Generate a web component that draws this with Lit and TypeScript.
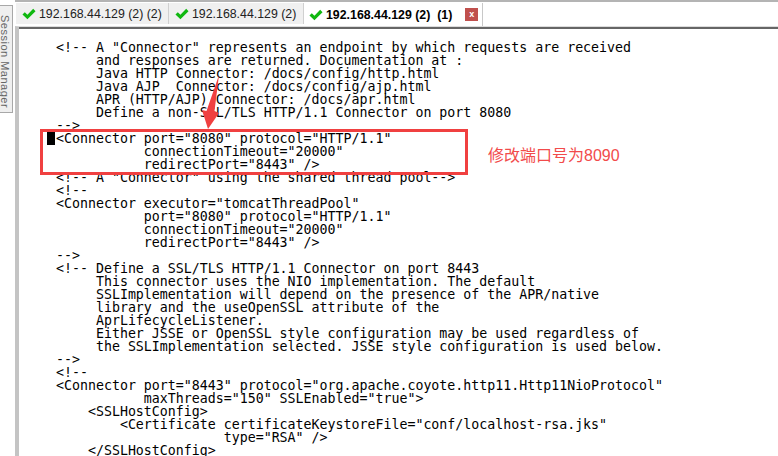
import { LitElement, html, css } from "lit";
import { customElement } from "lit/decorators.js";

const CODE = `<!-- A "Connector" represents an endpoint by which requests are received
     and responses are returned. Documentation at :
     Java HTTP Connector: /docs/config/http.html
     Java AJP  Connector: /docs/config/ajp.html
     APR (HTTP/AJP) Connector: /docs/apr.html
     Define a non-SSL/TLS HTTP/1.1 Connector on port 8080
-->
<Connector port="8080" protocol="HTTP/1.1"
           connectionTimeout="20000"
           redirectPort="8443" />
<!-- A "Connector" using the shared thread pool-->
<!--
<Connector executor="tomcatThreadPool"
           port="8080" protocol="HTTP/1.1"
           connectionTimeout="20000"
           redirectPort="8443" />
-->
<!-- Define a SSL/TLS HTTP/1.1 Connector on port 8443
     This connector uses the NIO implementation. The default
     SSLImplementation will depend on the presence of the APR/native
     library and the useOpenSSL attribute of the
     AprLifecycleListener.
     Either JSSE or OpenSSL style configuration may be used regardless of
     the SSLImplementation selected. JSSE style configuration is used below.
-->
<!--
<Connector port="8443" protocol="org.apache.coyote.http11.Http11NioProtocol"
           maxThreads="150" SSLEnabled="true">
    <SSLHostConfig>
        <Certificate certificateKeystoreFile="conf/localhost-rsa.jks"
                     type="RSA" />
    </SSLHostConfig>`;

const check = html`<svg class="check" viewBox="0 0 15 12" width="14" height="12"><path d="M0.5 6.5 L3 4 L5.8 6.8 L12 0.5 L14.5 3 L5.8 11.5 Z" fill="#10b810"/></svg>`;

@customElement("app-root")
export class AppRoot extends LitElement {
  static styles = css`
    :host { display: block; width: 778px; height: 456px; overflow: hidden; position: relative; background: #fff; font-family: "Liberation Sans", Arial, sans-serif; }
    .top { height: 3px; display: flex; }
    .top .a { width: 15px; background: #fff; }
    .top .b { flex: 1; background: #b4b4b4; height: 2px; }
    .main { display: flex; height: 453px; }
    .side { width: 15px; flex: none; background: #fff; padding-top: 2px; box-sizing: border-box; }
    .stab { width: 13px; height: 108px; background: #efefef; border: 1px solid #a8a8a8; border-left: none; box-sizing: border-box; overflow: hidden; display: flex; justify-content: center; }
    .stab span { writing-mode: vertical-rl; font-size: 11px; color: #666; white-space: nowrap; line-height: 11px; padding-top: 9px; letter-spacing: 0.5px; margin-left: -3px; }
    .content { flex: 1; display: flex; flex-direction: column; min-width: 0; }
    .tabs { height: 23px; display: flex; background: #fff; padding-left: 1px; box-sizing: border-box; flex: none; }
    .tab { height: 21px; display: flex; align-items: center; background: #f0f0f0; border-right: 1px solid #d0d0d0; box-sizing: border-box; font-size: 12.35px; color: #222; white-space: nowrap; padding-left: 6px; }
    .tab .check { margin-right: 3px; flex: none; }
    .tab.t1 { width: 153px; }
    .tab.t2 { width: 135px; }
    .tab.active { width: 179px; height: 23px; background: #fff; font-weight: 700; color: #000; border-right: 1px solid #c8c8c8; padding-left: 5px; }
    .close { width: 13px; height: 13px; background: #c0504d; color: #fff; font-size: 9px; font-weight: 700; display: flex; align-items: center; justify-content: center; margin-left: 13px; line-height: 1; }
    .editor { flex: 1; border-top: 1px solid #dcdcdc; border-left: 4px solid #c4c4c4; position: relative; box-sizing: border-box; overflow: hidden; }
    .editor::before { content: ""; position: absolute; left: 0; right: 0; top: 0; height: 2px; background: #666; }
    pre { margin: 0; padding: 14px 0 0 37px; font-family: "DejaVu Sans Mono", monospace; font-size: 13.28px; line-height: 13px; color: #000; }
    .caret { position: absolute; left: 28px; top: 105px; width: 8px; height: 13px; background: #000; }
    .box { position: absolute; left: 21px; top: 102px; width: 428px; height: 46px; border: 3px solid #f04040; box-sizing: border-box; }
    .note { position: absolute; left: 469px; top: 119px; color: #f24b4b; font-size: 16px; font-family: "Liberation Sans", "Noto Sans CJK SC", sans-serif; line-height: 20px; white-space: nowrap; }
    .arrow { position: absolute; left: 0; top: 0; }
  `;

  render() {
    return html`
      <div class="top"><div class="a"></div><div class="b"></div></div>
      <div class="main">
        <div class="side"><div class="stab"><span>Session Manager</span></div></div>
        <div class="content">
          <div class="tabs">
            <div class="tab t1">${check}192.168.44.129 (2) (2)</div>
            <div class="tab t2">${check}192.168.44.129 (2)</div>
            <div class="tab active">${check}192.168.44.129 (2)&nbsp;&nbsp;(1)<span class="close">x</span></div>
          </div>
          <div class="editor">
            <pre>${CODE}</pre>
            <div class="caret"></div>
            <div class="box"></div>
            <div class="note">修改端口号为8090</div>
            <svg class="arrow" width="300" height="130"><path d="M200 48 L195.5 84 L200 86 L189 102 L183 83 L187.5 84 Z" fill="#f04040"/></svg>
          </div>
        </div>
      </div>
    `;
  }
}
